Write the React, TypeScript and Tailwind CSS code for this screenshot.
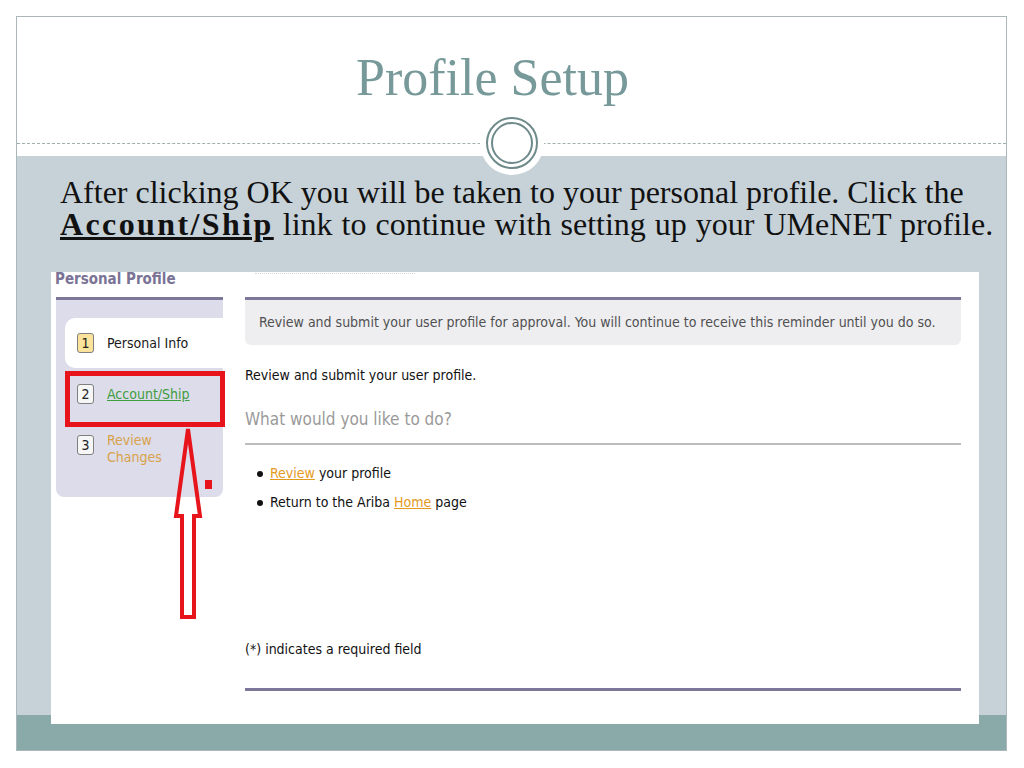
const shot = { fontFamily: '"DejaVu Sans Condensed", "Liberation Sans Narrow", "Liberation Sans", sans-serif' };
const serif = { fontFamily: '"Liberation Serif", "DejaVu Serif", serif' };

function Badge({ n, active }: { n: string; active?: boolean }) {
  return (
    <div
      className={
        "w-[17px] h-[20px] shrink-0 rounded-[3px] border border-[#7f7f7f] grid place-items-center text-[14px] leading-none text-[#222] " +
        (active ? "bg-[#fbe39b]" : "bg-[#f6f6f6]")
      }
    >
      {n}
    </div>
  );
}

function Sidebar() {
  return (
    <div className="w-[167px] h-[200px] shrink-0 border-t-[3px] border-[#7c7699] bg-[#dcdcea] rounded-b-[8px] pt-[18px] pl-[9px]">
      <div className="h-[50px] bg-white rounded-l-[10px] flex items-center gap-[13px] pl-[12px]">
        <Badge n="1" active />
        <span className="text-[14px] text-[#1a1a1a]">Personal Info</span>
      </div>
      <div className="h-[52px] flex items-center gap-[13px] pl-[12px]">
        <Badge n="2" />
        <span className="text-[14px] text-[#3f9c3f] underline">Account/Ship</span>
      </div>
      <div className="flex items-start gap-[13px] pl-[12px] mt-[12px]">
        <div className="mt-[3px]">
          <Badge n="3" />
        </div>
        <span className="text-[14px] leading-[17px] text-[#d9a24a]">
          Review
          <br />
          Changes
        </span>
      </div>
    </div>
  );
}

function Screenshot() {
  return (
    <div className="relative z-10 ml-[34px] -mb-[10px] w-[928px] h-[452px] bg-white overflow-hidden" style={shot}>
      <div className="h-[25px] flex items-start">
        <span className="pl-[4px] -mt-[2px] text-[15px] font-bold text-[#7a7396] leading-[18px]">Personal Profile</span>
        <div className="ml-[79px] mt-[1px] w-[160px] border-t border-dotted border-[#d8d8d8]" />
      </div>
      <div className="flex pl-[5px]">
        <Sidebar />
        <div className="ml-[22px] w-[716px]">
          <div className="border-t-[3px] border-[#7c7699]" />
          <div className="h-[45px] bg-[#eeeef0] rounded-b-[6px] flex items-center pl-[14px] text-[14px] text-[#505050]">
            Review and submit your user profile for approval. You will continue to receive this reminder until you do so.
          </div>
          <div className="mt-[22px] text-[14px] leading-[17px] text-[#111]">Review and submit your user profile.</div>
          <div className="mt-[24px] text-[17px] leading-[22px] text-[#9a9a9a]">What would you like to do?</div>
          <div className="mt-[13px] border-t-2 border-[#bdbdbd]" />
          <ul className="mt-[20px] pl-[12px] flex flex-col gap-[12px] text-[14px] leading-[17px] text-[#111]">
            <li className="flex items-center gap-[7px]">
              <span className="w-[6px] h-[6px] rounded-full bg-[#111]" />
              <span>
                <span className="text-[#e39a1e] underline">Review</span> your profile
              </span>
            </li>
            <li className="flex items-center gap-[7px]">
              <span className="w-[6px] h-[6px] rounded-full bg-[#111]" />
              <span>
                Return to the Ariba <span className="text-[#e39a1e] underline">Home</span> page
              </span>
            </li>
          </ul>
          <div className="mt-[130px] text-[14px] leading-[17px] text-[#111]">(*) indicates a required field</div>
          <div className="mt-[30px] border-t-[3px] border-[#7c7699]" />
        </div>
      </div>

      {/* red annotation */}
      <div className="absolute left-[14px] top-[99px] w-[160px] h-[56px] border-[5px] border-[#e8141c]" />
      <div className="absolute left-[154px] top-[208px] w-[7px] h-[9px] bg-[#e8141c]" />
      <svg className="absolute left-[119px] top-[148px]" width="40" height="205" viewBox="170 420 40 205">
        <polygon
          points="188,429 200,516 194,516 194,617 182,617 182,516 176,516"
          fill="none"
          stroke="#e8141c"
          strokeWidth="4"
          strokeLinejoin="miter"
        />
      </svg>
    </div>
  );
}

export default function App() {
  return (
    <div className="w-[1024px] h-[768px] bg-white pt-[16px] pl-[16px]">
      <div className="w-[991px] h-[735px] border border-[#aab7b8] flex flex-col">
        <div className="relative h-[139px] shrink-0 bg-white">
          <div className="pt-[31px] text-center pr-[38px]">
            <h1 className="text-[52px] leading-[60px] text-[#779999]" style={serif}>
              Profile Setup
            </h1>
          </div>
          <div className="absolute left-0 right-0 top-[126px] border-t border-dashed border-[#9fb0b0]" />
          <div className="absolute left-[463px] top-[94px] w-[64px] h-[64px] rounded-full bg-white grid place-items-center">
            <div className="w-[52px] h-[52px] rounded-full border-2 border-[#6f8a8a] grid place-items-center">
              <div className="w-[42px] h-[42px] rounded-full border-2 border-[#6f8a8a]" />
            </div>
          </div>
        </div>
        <div className="flex-1 bg-[#c7d1d8] pt-[20px]">
          <p className="relative z-10 pl-[43px] text-[32px] leading-[32px] text-[#111]" style={serif}>
            After clicking OK you will be taken to your personal profile. Click the
            <br />
            <span className="[word-spacing:1px]">
              <span className="font-bold underline tracking-[2.4px]">Account/Ship</span> link to continue with setting up your UMeNET profile.
            </span>
          </p>
          <div className="mt-[32px]">
            <Screenshot />
          </div>
        </div>
        <div className="h-[35px] shrink-0 bg-[#8aaaa9]" />
      </div>
    </div>
  );
}
